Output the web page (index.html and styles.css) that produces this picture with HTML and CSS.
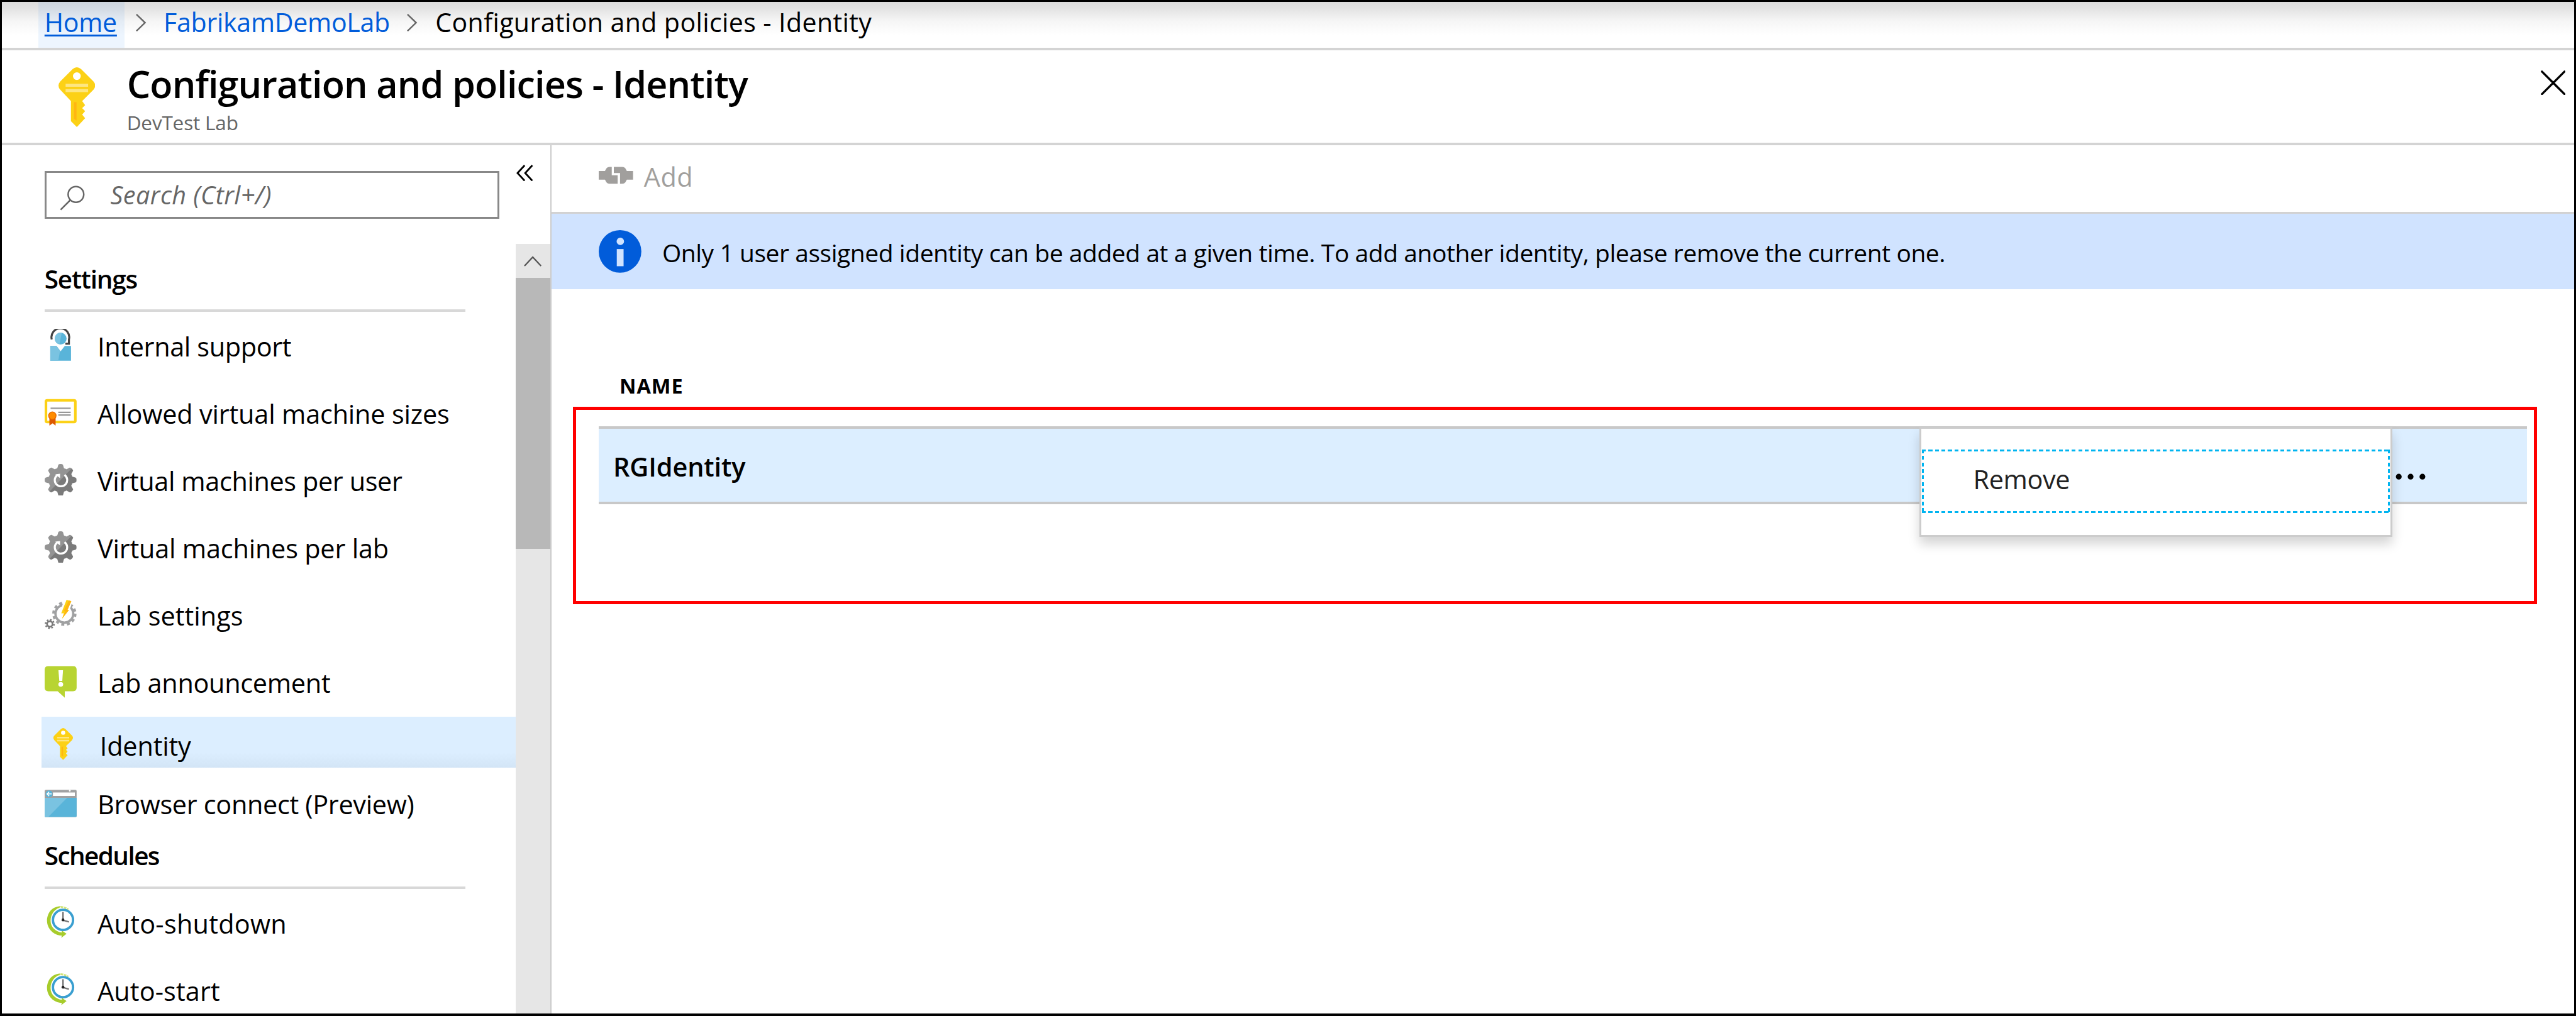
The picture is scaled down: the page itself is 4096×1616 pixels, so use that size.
FILE: index.html
```html
<!DOCTYPE html>
<html lang="en">
<head>
<meta charset="utf-8">
<title>Configuration and policies - Identity</title>
<link rel="stylesheet" href="styles.css">
</head>
<body>
<svg class="sprite" aria-hidden="true">
  <defs>
    <symbol id="key" viewBox="0 0 62 101">
      <path fill="#fcd116" d="M24 3Q31-3 38 3L59 24Q65 31 59 38L40 57L45 64L40 69L45 74L40 80L45 86L31 101L21 91V57L3 38Q-3 31 3 24Z"/>
      <circle cx="31" cy="15" r="6.6" fill="#fff"/>
      <path fill="#fde682" d="M12 28h38v5H12zM12 37h38v5H12z"/>
      <path fill="#ffb612" d="M26 59h4.500v31L26 87z"/>
    </symbol>
    <symbol id="gear" viewBox="0 0 54 54">
      <mask id="gear-shape">
        <circle cx="27" cy="27" r="20.500" fill="#fff"/>
        <g id="gear-teeth" fill="#fff">
          <path id="tooth" d="M20.500 10L23 1.500Q23.500 0 27 0T31 1.500L33.500 10V44L31 52.500Q30.500 54 27 54T23 52.500L20.500 44Z"/>
          <use href="#tooth" transform="rotate(45 27 27)"/>
          <use href="#tooth" transform="rotate(90 27 27)"/>
          <use href="#tooth" transform="rotate(135 27 27)"/>
        </g>
      </mask>
      <g mask="url(#gear-shape)">
        <path fill="#949494" d="M0 0h54v54H0z"/>
        <path fill="#7a7a7a" d="M50 3L3 52V54H54V3Z"/>
      </g>
      <path fill="none" stroke="#fff" stroke-width="3.400" d="M33.500 18.500A10.500 10.500 0 1 1 21 19"/>
      <path fill="#fff" d="M18 17.500L26 16.500V24Z"/>
    </symbol>
    <symbol id="clock" viewBox="0 0 54 54">
      <path fill="none" stroke="#d3e57c" stroke-width="3" stroke-dasharray="4 1.500" d="M22 2.500Q32 0 40 6"/>
      <path fill="#a7cc2b" d="M29 1C13-1 4 12 4 25C4 38 15 50 29 50L28 54L37 47L29 41.500V45C18 43 10 36 10 25C10 13 18 4 29 1Z"/>
      <circle cx="31" cy="23.500" r="17" fill="#fff" stroke="#3a9fd0" stroke-width="4"/>
      <path fill="none" stroke="#777" stroke-width="2.600" d="M31 10V24L41 27"/>
      <circle cx="31" cy="23.500" r="2.400" fill="#222"/>
    </symbol>
    <symbol id="chevron" viewBox="0 0 18 30">
      <path fill="none" stroke="#666" stroke-width="2.600" d="M1 1L15.500 15L1 29"/>
    </symbol>
  </defs>
</svg>

<div class="app">
  <nav class="breadcrumb">
    <a class="crumb crumb-home" href="#">Home</a>
    <svg class="crumb-sep"><use href="#chevron"/></svg>
    <a class="crumb crumb-lab" href="#">FabrikamDemoLab</a>
    <svg class="crumb-sep crumb-sep-last"><use href="#chevron"/></svg>
    <span class="crumb crumb-current">Configuration and policies - Identity</span>
  </nav>

  <header class="blade-header">
    <svg class="blade-icon"><use href="#key"/></svg>
    <div class="blade-titles">
      <h1 class="blade-title">Configuration and policies - Identity</h1>
      <p class="blade-subtitle">DevTest Lab</p>
    </div>
    <svg class="close" viewBox="0 0 42 42"><path d="M2 2L40 40M40 2L2 40" fill="none" stroke="#000" stroke-width="3.600" stroke-linecap="round"/></svg>
  </header>

  <div class="body">
    <aside class="sidebar">
      <div class="sidebar-top">
        <div class="search">
          <svg class="search-icon" viewBox="0 0 44 44"><g fill="none" stroke="#666" stroke-width="2.700"><circle cx="28" cy="15.500" r="13.500"/><path d="M18.500 25L1.500 42"/></g></svg>
          <span class="search-text">Search (Ctrl+/)</span>
        </div>
        <svg class="collapse" viewBox="0 0 28 28"><path d="M14 1L2 14L14 27M27 1L15 14L27 27" fill="none" stroke="#000" stroke-width="3"/></svg>
      </div>
      <div class="sidebar-scroll">
        <div class="menu">
          <h2 class="group-title">Settings</h2>
          <a class="item item-support">
            <svg class="item-icon" viewBox="0 0 54 54">
              <path fill="none" stroke="#444" stroke-width="3.400" d="M12 18A15 15 0 1 1 41 18V25H35"/>
              <circle cx="27" cy="16.500" r="10" fill="#59b4d9"/>
              <path fill="#7ac3e1" d="M27 6.500a10 10 0 0 0-2 19.800L29 6.700z"/>
              <path fill="#59b4d9" d="M9.500 29H20L27 38L34 29H44.500V54H9.500z"/>
              <path fill="#7ac3e1" d="M9.500 29H20L26 37L23 54H9.500z"/>
            </svg>
            <span class="item-label">Internal support</span>
          </a>
          <a class="item item-sizes">
            <svg class="item-icon" viewBox="0 0 54 54">
              <rect x="2.200" y="7.200" width="49.600" height="36.600" rx="2" fill="#fff" stroke="#fcd116" stroke-width="4.400"/>
              <path stroke="#999" stroke-width="2.400" d="M10 20.500H44M23 27.500H44M23 32H44"/>
              <path fill="#dd5900" d="M8 36H18.500V50L13.500 46L8 50z"/>
              <circle cx="13" cy="33" r="6.300" fill="#ff8c00" stroke="#e86b00" stroke-width="1.500"/>
            </svg>
            <span class="item-label">Allowed virtual machine sizes</span>
          </a>
          <a class="item item-per-user">
            <svg class="item-icon"><use href="#gear"/></svg>
            <span class="item-label">Virtual machines per user</span>
          </a>
          <a class="item item-per-lab">
            <svg class="item-icon"><use href="#gear"/></svg>
            <span class="item-label">Virtual machines per lab</span>
          </a>
          <a class="item item-lab-settings">
            <svg class="item-icon" viewBox="0 0 54 54">
              <g fill="none" stroke="#a0a1a2">
                <circle cx="33.300" cy="25.700" r="15" stroke-width="4"/>
                <circle cx="33.300" cy="25.700" r="18.200" stroke-width="4.600" stroke-dasharray="5 4.530"/>
              </g>
              <g fill="none" stroke="#7a7a7a">
                <circle cx="8.700" cy="43" r="4.600" stroke-width="2.800"/>
                <circle cx="8.700" cy="43" r="7" stroke-width="3" stroke-dasharray="2.750 2.750"/>
              </g>
              <path fill="#fff" d="M34 0L48 2L42 20L30 37L25 25z"/>
              <path fill="#fcd116" d="M37 2L45 4.500L38.500 19.500H41L29.500 34L32.500 25H28z"/>
              <path fill="#ffb612" d="M45 4.500L38.500 19.500H41L29.500 34L35 21.500H32L41 3.300z"/>
            </svg>
            <span class="item-label">Lab settings</span>
          </a>
          <a class="item item-announcement">
            <svg class="item-icon" viewBox="0 0 54 54">
              <path fill="#b8d432" d="M6 .5H48Q54 .5 54 6.500V37Q54 43 48 43H34V54L22 43H6Q0 43 0 37V6.500Q0 .5 6 .5z"/>
              <path fill="#fff" d="M23.300 7.500H31L29.800 25.500H24.700z"/>
              <circle cx="27.200" cy="31.300" r="4" fill="#fff"/>
            </svg>
            <span class="item-label">Lab announcement</span>
          </a>
          <a class="item item-identity item-selected">
            <svg class="item-icon"><use href="#key"/></svg>
            <span class="item-label">Identity</span>
          </a>
          <a class="item item-browser">
            <svg class="item-icon" viewBox="0 0 54 54">
              <rect y="4.500" width="54" height="46" rx="2" fill="#a0a1a2"/>
              <path fill="#59b4d9" d="M0 18H54V48.500Q54 50.500 52 50.500H2Q0 50.500 0 48.500z"/>
              <path fill="#7ac3e1" d="M0 18H38L6 50.500H2Q0 50.500 0 48.500z"/>
              <path fill="#fff" d="M14 9H51V15H14z"/>
              <circle cx="42.500" cy="6" r="1.500" fill="#fff"/>
              <circle cx="7.500" cy="11.500" r="5.800" fill="#59b4d9"/>
              <path fill="none" stroke="#fff" stroke-width="1.600" d="M12 11.500H4M7.500 8L4 11.500L7.500 15"/>
            </svg>
            <span class="item-label">Browser connect (Preview)</span>
          </a>
          <h2 class="group-title group-title-schedules">Schedules</h2>
          <a class="item item-shutdown">
            <svg class="item-icon"><use href="#clock"/></svg>
            <span class="item-label">Auto-shutdown</span>
          </a>
          <a class="item item-start">
            <svg class="item-icon"><use href="#clock"/></svg>
            <span class="item-label">Auto-start</span>
          </a>
        </div>
        <div class="scrollbar">
          <div class="scroll-up"><svg viewBox="0 0 30 18"><path d="M1 17L15 2L29 17" fill="none" stroke="#555" stroke-width="2.400"/></svg></div>
          <div class="scroll-thumb"></div>
        </div>
      </div>
    </aside>

    <main class="content">
      <div class="toolbar">
        <svg class="add-icon" viewBox="0 0 58 30">
          <path fill="#a19f9d" d="M0 7.500H10.500L13 3Q15 .5 18 .5H22V14.500H32V29H18Q15 29 13 26.500L10.500 22H0z"/>
          <path fill="#a19f9d" d="M25.500 .5H40Q43 .5 45 3L47.500 7.500H58V22H47.500L45 26.500Q43 29 40 29H36V11H25.500z"/>
        </svg>
        <span class="add-label">Add</span>
      </div>
      <div class="banner">
        <svg class="info-icon" viewBox="0 0 72 72"><circle cx="36" cy="36" r="36" fill="#015cda"/><circle cx="36.500" cy="19" r="6.300" fill="#d0e3ff"/><path fill="#d0e3ff" d="M30.500 32H42V61H30.500z"/></svg>
        <span class="banner-text">Only 1 user assigned identity can be added at a given time. To add another identity, please remove the current one.</span>
      </div>
      <div class="column-name">NAME</div>
      <div class="highlight">
        <div class="row">
          <span class="row-name">RGIdentity</span>
          <svg class="more" viewBox="0 0 51 11"><circle cx="5.500" cy="5.500" r="4.900"/><circle cx="25.500" cy="5.500" r="4.900"/><circle cx="45.500" cy="5.500" r="4.900"/></svg>
          <div class="context-menu">
            <div class="context-item">Remove</div>
          </div>
        </div>
      </div>
    </main>
  </div>
</div>
</body>
</html>
```
FILE: styles.css
```css
/* 1rem = 100 design pixels */
html { font-size: 94.161px; }
*, *::before, *::after { box-sizing: border-box; }
body {
  margin: 0;
  font-family: "Open Sans", "Noto Sans", sans-serif;
  color: #000;
  background: #fff;
}
h1, h2, p { margin: 0; }
a { color: inherit; text-decoration: none; }
svg { display: block; flex: none; }
.sprite { position: absolute; width: 0; height: 0; }

.app {
  display: flex;
  flex-direction: column;
  width: 100vw;
  height: 100vh;
  overflow: hidden;
  border: solid #000;
  border-width: .032rem .032rem .043rem .032rem;
  white-space: nowrap;
}

/* Breadcrumb */
.breadcrumb {
  display: flex;
  flex: none;
  height: .82rem;
  padding-left: .62rem;
  border-bottom: .043rem solid #d4d4d4;
  background: linear-gradient(#ddd 0, #e2e2e2 .1rem, #f6f6f6 .33rem, #fff .56rem);
  font-size: .437rem;
  line-height: .7rem;
}
.crumb-home {
  width: 1.45rem;
  padding-left: .1rem;
  background: rgba(0, 120, 240, .07);
  color: #015cda;
  text-decoration: underline;
  text-decoration-thickness: .035rem;
  text-underline-offset: .045rem;
  letter-spacing: -.003rem;
}
.crumb-sep { width: .18rem; height: .3rem; margin: .2rem .285rem 0 .195rem; }
.crumb-sep-last { margin-left: .31rem; margin-right: .3rem; }
.crumb-lab { width: 3.8rem; color: #015cda; letter-spacing: -.003rem; }
.crumb-current { letter-spacing: .004rem; }

/* Blade header */
.blade-header {
  display: flex;
  flex: none;
  height: 1.605rem;
  padding: .285rem .145rem 0 .955rem;
  border-bottom: .043rem solid #d4d4d4;
}
.blade-icon { width: .62rem; height: 1.01rem; }
.blade-titles { flex: 1; padding-left: .535rem; }
.blade-title {
  margin-top: -.12rem;
  font-size: .63rem;
  font-weight: 600;
  line-height: .8rem;
  letter-spacing: -.0097rem;
}
.blade-subtitle {
  margin-top: .05rem;
  color: #666;
  font-size: .335rem;
  line-height: .4rem;
  letter-spacing: -.002rem;
}
.close { width: .42rem; height: .42rem; margin-top: .05rem; }

.body { display: flex; flex: 1; min-height: 0; }

/* Sidebar */
.sidebar {
  display: flex;
  flex: none;
  flex-direction: column;
  width: 9.28rem;
  border-right: .022rem solid #ccc;
}
.sidebar-top {
  display: flex;
  flex: none;
  height: 1.667rem;
  padding: .427rem 0 0 .72rem;
}
.search {
  display: flex;
  width: 7.68rem;
  height: .815rem;
  padding-left: .23rem;
  border: .033rem solid #888;
}
.search-icon { width: .43rem; height: .43rem; margin-top: .215rem; }
.search-text {
  margin-left: .42rem;
  color: #666;
  font-size: .42rem;
  font-style: italic;
  line-height: .75rem;
  letter-spacing: .005rem;
}
.collapse { width: .28rem; height: .28rem; margin: -.1rem 0 0 .29rem; }
.sidebar-scroll { display: flex; flex: 1; min-height: 0; }
.menu { flex: 1; padding-left: .67rem; overflow: hidden; }
.group-title {
  width: 7.11rem;
  height: 1.143rem;
  margin: 0 0 .021rem .05rem;
  padding-top: .343rem;
  border-bottom: .043rem solid #d8d8d8;
  font-size: .43rem;
  font-weight: 600;
  line-height: .48rem;
  letter-spacing: -.0125rem;
}
.group-title-schedules {
  height: .81rem;
  padding-top: .01rem;
  letter-spacing: -.017rem;
}
.item {
  display: flex;
  align-items: center;
  height: 1.137rem;
  padding-left: .05rem;
}
.item-icon { width: .54rem; height: .54rem; margin-bottom: .054rem; }
.item-label { margin-left: .355rem; font-size: .44rem; line-height: .6rem; letter-spacing: -.002rem; }
.item-support .item-label { letter-spacing: -.0039rem; }
.item-per-user .item-label { letter-spacing: -.0042rem; }
.item-per-lab .item-label { letter-spacing: -.0022rem; }
.item-lab-settings .item-label { letter-spacing: 0; }
.item-announcement .item-label { letter-spacing: -.0032rem; }
.item-browser .item-label { letter-spacing: -.0035rem; }
.item-shutdown .item-label { letter-spacing: .0027rem; }
.item-start .item-label { letter-spacing: .001rem; }
.item-selected {
  height: .855rem;
  padding: .124rem 0 0 .09rem;
  background: linear-gradient(#dceeff 70%, #d3e5f6);
}
.item-browser { height: 1.24rem; padding-top: .01rem; }
.scrollbar { width: .58rem; background: #e6e6e6; }
.scroll-up { display: flex; height: .57rem; align-items: center; justify-content: center; }
.scroll-up svg { width: .3rem; height: .18rem; }
.scroll-thumb { height: 4.58rem; background: #b8b8b8; }

/* Content */
.content { flex: 1; min-width: 0; }
.toolbar {
  display: flex;
  height: 1.15rem;
  padding: .353rem 0 0 .8rem;
  border-bottom: .035rem solid #d2d2d2;
}
.add-icon { width: .58rem; height: .3rem; }
.add-label {
  margin: -.128rem 0 0 .18rem;
  color: #a19f9d;
  font-size: .44rem;
  line-height: .6rem;
  letter-spacing: .006rem;
}
.banner {
  display: flex;
  align-items: flex-start;
  height: 1.28rem;
  padding: .28rem 0 0 .8rem;
  background: #d0e3ff;
}
.info-icon { width: .72rem; height: .72rem; }
.banner-text {
  margin: .08rem 0 0 .35rem;
  font-size: .414rem;
  line-height: .6rem;
  letter-spacing: -.0046rem;
}
.column-name {
  height: 1.987rem;
  padding: 1.38rem 0 0 1.15rem;
  font-size: .345rem;
  font-weight: 700;
  line-height: .5rem;
  letter-spacing: .0105rem;
}
.highlight {
  height: 3.333rem;
  margin: 0 .63rem 0 .36rem;
  padding: .27rem .117rem 0 .39rem;
  border: .0535rem solid #f00;
}
.row {
  position: relative;
  display: flex;
  align-items: center;
  justify-content: space-between;
  height: 1.317rem;
  padding: 0 1.71rem 0 .24rem;
  border: solid #c8c8c8;
  border-width: .043rem 0;
  background: #dceeff;
}
.row-name { font-size: .44rem; font-weight: 600; padding-top: .04rem; letter-spacing: -.0014rem; }
.more { width: .51rem; height: .11rem; margin-top: .4rem; }

/* Menu opened from the row's "more" button */
.context-menu {
  position: absolute;
  top: -.03rem;
  right: 2.265rem;
  width: 7.99rem;
  height: 1.86rem;
  padding: .355rem .005rem;
  border: .035rem solid #ccc;
  background: #fff;
  box-shadow: 0 .13rem .18rem rgba(0, 0, 0, .17);
}
.context-item {
  --dash: #00b4f0 0 .066rem, transparent .066rem .11rem;
  height: 1.08rem;
  padding-left: .87rem;
  background:
    repeating-linear-gradient(90deg, var(--dash)) top / 100% .037rem no-repeat,
    repeating-linear-gradient(90deg, var(--dash)) bottom / 100% .037rem no-repeat,
    repeating-linear-gradient(180deg, var(--dash)) left / .037rem 100% no-repeat,
    repeating-linear-gradient(180deg, var(--dash)) right / .037rem 100% no-repeat;
  color: #222;
  font-size: .44rem;
  line-height: 1.01rem;
  letter-spacing: -.004rem;
}
```
